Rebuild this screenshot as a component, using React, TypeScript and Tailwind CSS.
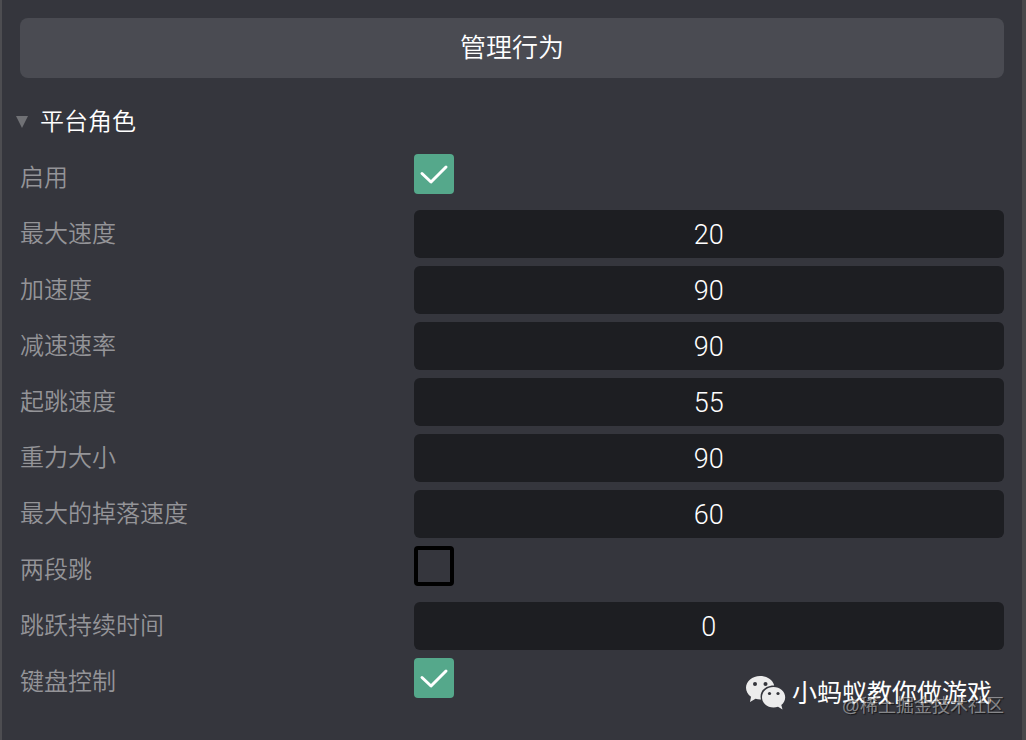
import React, { useState } from 'react'

type Field =
  | { id: string; label: string; type: 'number'; value: string }
  | { id: string; label: string; type: 'check'; value: boolean }

const fields: Field[] = [
  { id: 'enabled', label: '启用', type: 'check', value: true },
  { id: 'maxSpeed', label: '最大速度', type: 'number', value: '20' },
  { id: 'acceleration', label: '加速度', type: 'number', value: '90' },
  { id: 'deceleration', label: '减速速率', type: 'number', value: '90' },
  { id: 'jumpSpeed', label: '起跳速度', type: 'number', value: '55' },
  { id: 'gravity', label: '重力大小', type: 'number', value: '90' },
  { id: 'maxFallSpeed', label: '最大的掉落速度', type: 'number', value: '60' },
  { id: 'doubleJump', label: '两段跳', type: 'check', value: false },
  { id: 'jumpSustain', label: '跳跃持续时间', type: 'number', value: '0' },
  { id: 'keyboard', label: '键盘控制', type: 'check', value: true },
]

const Checkbox = ({ id, checked }: { id: string; checked: boolean }) => {
  return (
    <span className="grid size-10">
      <input
        id={id}
        type="checkbox"
        defaultChecked={checked}
        className="peer col-start-1 row-start-1 size-10 appearance-none rounded border-4 border-black checked:border-0 checked:bg-[#55a88b]"
      />
      <svg
        viewBox="0 0 40 40"
        className="pointer-events-none col-start-1 row-start-1 hidden size-10 peer-checked:block"
        fill="none"
        stroke="#fff"
        strokeWidth="3"
        strokeLinecap="round"
        strokeLinejoin="round"
      >
        <path d="M8 19.500 L17 28 L32 13" />
      </svg>
    </span>
  )
}

const FieldRow = ({ field }: { field: Field }) => {
  return (
    <div className="grid h-12 grid-cols-[2fr_3fr]">
      <label htmlFor={field.id} className="self-center text-2xl font-[350] text-[#949498]">
        {field.label}
      </label>
      {field.type === 'check' ? (
        <Checkbox id={field.id} checked={field.value} />
      ) : (
        <input
          id={field.id}
          type="text"
          inputMode="numeric"
          defaultValue={field.value}
          className="h-12 w-full min-w-0 rounded-md bg-[#1d1e22] pt-0.5 text-center font-['Roboto',sans-serif] text-[27px] leading-none font-light text-white"
        />
      )}
    </div>
  )
}

const WechatIcon = () => {
  return (
    <svg viewBox="0 0 40 36" className="h-9 w-10 shrink-0" fill="#ececec">
      <path d="M14 1C6.300 1 0 6.200 0 12.800c0 3.600 1.900 6.800 5 9L4 27l5.500-3.200c1.800.6 3.700.9 5.500.8-2.200-8 4-14.400 13.200-14.200C26.600 4.800 20.800 1 14 1z" />
      <path d="M27.500 12C21 12 16 16.600 16 22.300s5 10.300 11.500 10.300c1.600 0 3.100-.3 4.500-.8l4.500 2.600-1.200-4.300c2.500-1.900 3.900-4.700 3.900-7.800C39.200 16.600 34 12 27.500 12z" />
      <g fill="#34353b">
        <circle cx="9" cy="9" r="2" />
        <circle cx="19.500" cy="9" r="2" />
        <circle cx="23.500" cy="18.500" r="1.600" />
        <circle cx="32" cy="18.500" r="1.600" />
      </g>
    </svg>
  )
}

const App = () => {
  const [open, setOpen] = useState(true)

  return (
    <div className="relative min-h-screen border-r-4 border-l-2 border-r-[#48484b] border-l-[#4d4d51] bg-[#35363d] px-[18px] pt-[18px] font-['Liberation_Sans','Noto_Sans_CJK_SC',sans-serif]">
      <button
        type="button"
        className="h-[60px] w-full rounded-lg bg-[#4a4b52] text-[26px] leading-none font-[350] text-white"
      >
        管理行为
      </button>
      <h2 className="mt-5 mb-2">
        <button
          type="button"
          aria-expanded={open}
          onClick={() => setOpen(!open)}
          className="-ml-1 flex h-12 items-center gap-3 text-2xl font-[350] text-white"
        >
          <svg viewBox="0 0 12 12" className="size-3" fill="#707175">
            <path d="M0 0H12L6 12Z" />
          </svg>
          平台角色
        </button>
      </h2>
      {open && (
        <div className="flex flex-col gap-2">
          {fields.map((field) => (
            <FieldRow key={field.id} field={field} />
          ))}
        </div>
      )}
      <div className="pointer-events-none absolute right-[30px] bottom-7 flex items-center gap-1.5 text-[25px] text-white">
        <WechatIcon />
        <span>小蚂蚁教你做游戏</span>
      </div>
      <p className="pointer-events-none absolute right-[18px] bottom-5 text-lg text-white/45 [text-shadow:1px_1px_1px_#0009]">
        @稀土掘金技术社区
      </p>
    </div>
  )
}

export default App
